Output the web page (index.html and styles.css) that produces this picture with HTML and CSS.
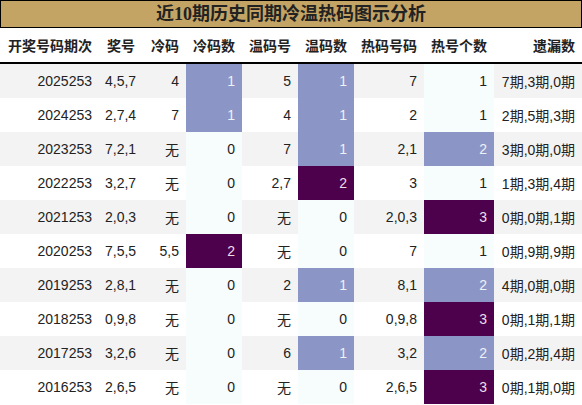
FILE: index.html
```html
<!DOCTYPE html>
<html lang="zh">
<head>
    <meta charset="UTF-8">
    <title>近10期历史同期冷温热码图示分析</title>
    <link rel="stylesheet" href="styles.css">
</head>
<body>

    <!-- Title bar -->
    <div class="title">近10期历史同期冷温热码图示分析</div>

    <!-- Analysis table -->
    <table class="grid">
        <colgroup>
            <col class="c-issue"><col class="c-num"><col class="c-num">
            <col class="c-mid"><col class="c-mid"><col class="c-mid">
            <col class="c-wide"><col class="c-wide"><col class="c-miss">
        </colgroup>
        <thead>
            <tr>
                <th>开奖号码期次</th><th>奖号</th><th>冷码</th><th>冷码数</th><th>温码号</th>
                <th>温码数</th><th>热码号码</th><th>热号个数</th><th>遗漏数</th>
            </tr>
        </thead>
        <tbody>
            <tr><td>2025253</td><td>4,5,7</td><td>4</td><td class="mid">1</td><td>5</td><td class="mid">1</td><td>7</td><td class="low">1</td><td>7期,3期,0期</td></tr>
            <tr><td>2024253</td><td>2,7,4</td><td>7</td><td class="mid">1</td><td>4</td><td class="mid">1</td><td>2</td><td class="low">1</td><td>2期,5期,3期</td></tr>
            <tr><td>2023253</td><td>7,2,1</td><td>无</td><td class="low">0</td><td>7</td><td class="mid">1</td><td>2,1</td><td class="mid">2</td><td>3期,0期,0期</td></tr>
            <tr><td>2022253</td><td>3,2,7</td><td>无</td><td class="low">0</td><td>2,7</td><td class="high">2</td><td>3</td><td class="low">1</td><td>1期,3期,4期</td></tr>
            <tr><td>2021253</td><td>2,0,3</td><td>无</td><td class="low">0</td><td>无</td><td class="low">0</td><td>2,0,3</td><td class="high">3</td><td>0期,0期,1期</td></tr>
            <tr><td>2020253</td><td>7,5,5</td><td>5,5</td><td class="high">2</td><td>无</td><td class="low">0</td><td>7</td><td class="low">1</td><td>0期,9期,9期</td></tr>
            <tr><td>2019253</td><td>2,8,1</td><td>无</td><td class="low">0</td><td>2</td><td class="mid">1</td><td>8,1</td><td class="mid">2</td><td>4期,0期,0期</td></tr>
            <tr><td>2018253</td><td>0,9,8</td><td>无</td><td class="low">0</td><td>无</td><td class="low">0</td><td>0,9,8</td><td class="high">3</td><td>0期,1期,1期</td></tr>
            <tr><td>2017253</td><td>3,2,6</td><td>无</td><td class="low">0</td><td>6</td><td class="mid">1</td><td>3,2</td><td class="mid">2</td><td>0期,2期,4期</td></tr>
            <tr><td>2016253</td><td>2,6,5</td><td>无</td><td class="low">0</td><td>无</td><td class="low">0</td><td>2,6,5</td><td class="high">3</td><td>0期,1期,0期</td></tr>
        </tbody>
    </table>

</body>
</html>
```

FILE: styles.css
```css
/* Page */
body {
    margin: 0;
    width: 582px;
    background: #fff;
    color: #222;
    font-family: "Liberation Sans", "Noto Sans CJK SC", sans-serif;
}

/* Title bar */
.title {
    height: 26px;
    line-height: 26px;
    border: 1px solid #000;
    background-color: #c4a464;
    text-align: center;
    font-family: "Liberation Serif", "Noto Sans CJK SC", serif;
    font-size: 18px;
    font-weight: bold;
    color: #222;
}

/* Table */
.grid {
    width: 582px;
    table-layout: fixed;
    border-collapse: separate;
    border-spacing: 0;
    font-size: 14px;
}
.c-issue { width: 98px; }
.c-num { width: 44px; }
.c-mid { width: 56px; }
.c-wide { width: 70px; }
.c-miss { width: 88px; }

.grid th,
.grid td {
    height: 34px;
    padding: 0 7px;
    text-align: right;
    white-space: nowrap;
}
.grid th {
    font-weight: bold;
    font-family: "Noto Sans CJK SC", sans-serif;
    border-bottom: 2px solid #000;
}
.grid th:first-child,
.grid td:first-child {
    padding-right: 6px;
}

/* Striped rows */
.grid tbody tr:nth-child(odd) {
    background-color: #f3f3f3;
}

/* Colour scale cells */
.grid td.low {
    background-color: #f7fcfd;
}
.grid td.mid {
    background-color: #8c96c6;
    color: #eef0f7;
}
.grid td.high {
    background-color: #4d004b;
    color: #eedde9;
}
```
